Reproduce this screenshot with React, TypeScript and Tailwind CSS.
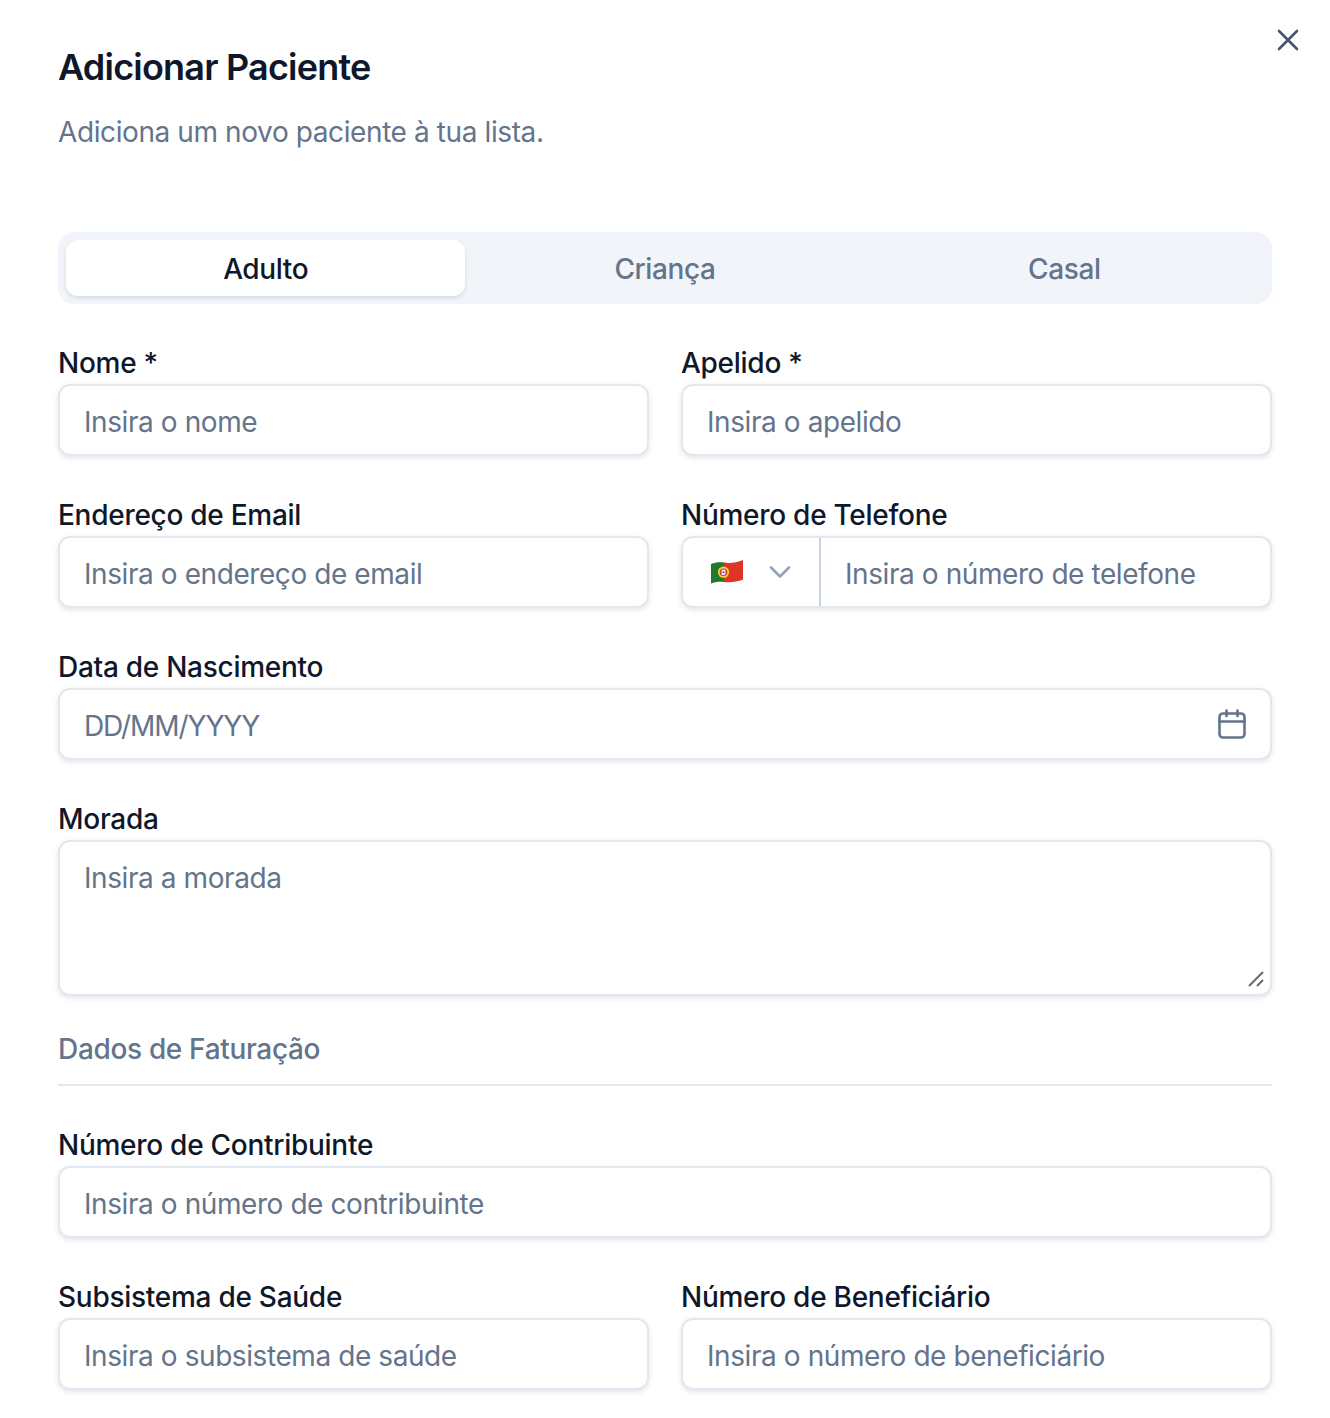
import React from "react";

const inputCls =
  "w-full h-[72px] rounded-[12px] border-2 border-[#e2e8f0] bg-white px-[24px] pt-[3px] text-[28px] tracking-[-0.42px] text-[#0f172a] shadow-[0_2px_5px_rgba(30,41,82,0.12)] outline-none placeholder:text-[#64748b]";

function Label({ children }: { children: React.ReactNode }) {
  return <label className="block h-[40px] mb-[2px] pt-[1px] text-[28px] leading-[40px] font-medium tracking-[-0.27px] text-[#0f172a]">{children}</label>;
}

function Field({ label, placeholder }: { label: string; placeholder: string }) {
  return (
    <div>
      <Label>{label}</Label>
      <input className={inputCls} placeholder={placeholder} />
    </div>
  );
}

function Flag() {
  return (
    <svg width="34" height="26" viewBox="0 0 34 26" className="shrink-0">
      <path d="M1 5C5 3.6 9 3 14 3.6V23C9 22.4 5 23 1 24.6Z" fill="#1f7a2e" />
      <path d="M14 3.6C20 4.4 27 3.6 33 1V20.5C27 23 20 23.8 14 23Z" fill="#de3527" />
      <circle cx="13.5" cy="13.2" r="5.6" fill="#f5d33f" />
      <circle cx="13.5" cy="13.2" r="3.8" fill="#d33a2c" />
      <rect x="11.5" y="10.5" width="4" height="5.4" rx="1.5" fill="#eef1f6" />
      <circle cx="13.5" cy="13.2" r="1" fill="#2f55a4" />
    </svg>
  );
}

export default function App() {
  return (
    <div className="relative w-[1330px] h-[1418px] overflow-hidden bg-white px-[58px] pt-[42px] font-['Inter',sans-serif] antialiased">
      <button className="absolute right-[30px] top-[28px] text-[#475569]" aria-label="Fechar">
        <svg width="24" height="24" viewBox="0 0 24 24" fill="none" stroke="currentColor" strokeWidth="2.6" strokeLinecap="round">
          <path d="M3 3L21 21M21 3L3 21" />
        </svg>
      </button>

      <h2 className="h-[50px] text-[36px] leading-[50px] font-semibold tracking-[-0.8px] text-[#0f172a]">Adicionar Paciente</h2>
      <p className="mt-[20px] h-[40px] text-[28px] leading-[40px] tracking-[-0.4px] text-[#64748b]">Adiciona um novo paciente à tua lista.</p>

      <div className="mt-[80px] grid h-[72px] grid-cols-3 rounded-[16px] bg-[#f1f5f9] p-[8px] text-[28px] font-medium tracking-[-0.4px] text-[#64748b]">
        <div className="flex items-center justify-center rounded-[12px] bg-white pt-[1px] text-[#0f172a] shadow-[0_2px_4px_rgba(15,23,42,0.12)]">Adulto</div>
        <div className="flex items-center justify-center pt-[1px]">Criança</div>
        <div className="flex items-center justify-center pt-[1px]">Casal</div>
      </div>

      <div className="mt-[38px] flex flex-col gap-[38px]">
        <div className="grid grid-cols-2 gap-x-[32px]">
          <Field label="Nome *" placeholder="Insira o nome" />
          <Field label="Apelido *" placeholder="Insira o apelido" />
        </div>
        <div className="grid grid-cols-2 gap-x-[32px]">
          <Field label="Endereço de Email" placeholder="Insira o endereço de email" />
          <div>
            <Label>Número de Telefone</Label>
            <div className="flex h-[72px] rounded-[12px] border-2 border-[#e2e8f0] bg-white shadow-[0_2px_5px_rgba(30,41,82,0.12)]">
              <div className="flex w-[138px] shrink-0 items-center gap-[24px] border-r-2 border-[#cbd5e1] pl-[27px]">
                <Flag />
                <svg width="24" height="24" viewBox="0 0 24 24" fill="none" stroke="#94a3b8" strokeWidth="2.6" strokeLinecap="round" strokeLinejoin="round">
                  <path d="M3 7.5L12 16.5L21 7.5" />
                </svg>
              </div>
              <input className="min-w-0 flex-1 bg-transparent px-[24px] pt-[3px] text-[28px] tracking-[-0.42px] outline-none placeholder:text-[#64748b]" placeholder="Insira o número de telefone" />
            </div>
          </div>
        </div>
        <div>
          <Label>Data de Nascimento</Label>
          <div className="relative">
            <input className={`${inputCls} !tracking-[-1.1px]`} placeholder="DD/MM/YYYY" />
            <svg className="absolute right-[24px] top-[20px]" width="32" height="32" viewBox="0 0 32 32" fill="none" stroke="#64748b" strokeWidth="2.6" strokeLinecap="round" strokeLinejoin="round">
              <rect x="3.5" y="5.5" width="25" height="24" rx="3.5" />
              <path d="M3.5 13.5H28.5M10.5 2.5V8M21.5 2.5V8" />
            </svg>
          </div>
        </div>
        <div>
          <Label>Morada</Label>
          <div className="relative">
            <textarea className={`${inputCls} !h-[156px] block resize-none !pt-[15px]`} placeholder="Insira a morada" />
            <svg className="absolute bottom-[8px] right-[7px]" width="18" height="18" viewBox="0 0 18 18" fill="none" stroke="#6b6b6b" strokeWidth="2">
              <path d="M2 16L16 2M10 16L16 10" />
            </svg>
          </div>
        </div>
      </div>

      <div className="mt-[32px] h-[58px] border-b-2 border-[#e2e8f0] pt-[1px] text-[28px] leading-[40px] font-medium tracking-[-0.33px] text-[#64748b]">Dados de Faturação</div>

      <div className="mt-[38px] flex flex-col gap-[38px]">
        <Field label="Número de Contribuinte" placeholder="Insira o número de contribuinte" />
        <div className="grid grid-cols-2 gap-x-[32px]">
          <Field label="Subsistema de Saúde" placeholder="Insira o subsistema de saúde" />
          <Field label="Número de Beneficiário" placeholder="Insira o número de beneficiário" />
        </div>
      </div>
    </div>
  );
}
